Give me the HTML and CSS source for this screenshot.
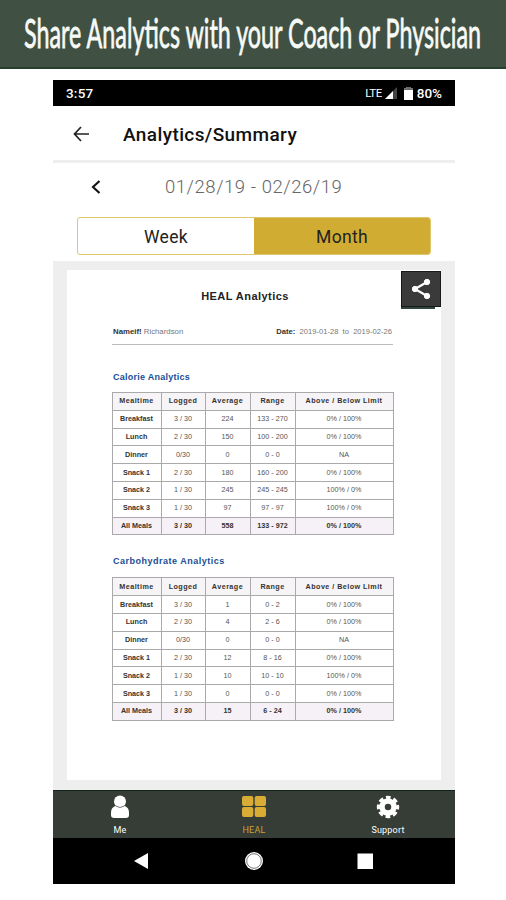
FILE: index.html
```html
<!DOCTYPE html>
<html lang="en">
<head>
<meta charset="utf-8">
<title>HEAL Analytics</title>
<link rel="stylesheet" href="styles.css">
</head>
<body>
<header class="banner">
  <svg width="506" height="69"><text x="24" y="47.5" textLength="457" lengthAdjust="spacingAndGlyphs">Share Analytics with your Coach or Physician</text></svg>
</header>
<main class="phone">
  <div class="status">
    <span class="time">3:57</span>
    <span class="lte">LTE</span>
    <svg class="signal" width="13" height="12"><path d="M0 12L12 0V12Z" fill="#444"/><path d="M0 12L8 4V12Z" fill="#fff"/></svg>
    <svg class="battery" width="9" height="13"><path d="M2.500 0h4v1.500H9V13H0V1.500h2.500z" fill="#fff"/><path d="M2.500 0h4v1.500H9V3H0V1.500h2.500z" fill="#666"/></svg>
    <span class="percent">80%</span>
  </div>
  <div class="appbar">
    <svg width="16" height="16" fill="none" stroke="#222" stroke-width="1.700"><path d="M8 1L1.500 8L8 15M1.500 8H16"/></svg>
    <h1>Analytics/Summary</h1>
  </div>
  <div class="dates">
    <svg width="10" height="14" fill="none" stroke="#111" stroke-width="2.100"><path d="M8.500 1L2 7L8.500 13"/></svg>
    <span>01/28/19 - 02/26/19</span>
  </div>
  <div class="segments"><span>Week</span><span class="active">Month</span></div>
  <section class="viewer">
    <article class="paper">
      <h2>HEAL Analytics</h2>
      <div class="meta"><span><b>Nameif!</b> Richardson</span><span class="range"><b>Date:</b>&nbsp; 2019-01-28 &nbsp;to&nbsp; 2019-02-26</span></div>
      <h3 class="calorie">Calorie Analytics</h3>
      <table>
        <colgroup><col class="c1"><col class="c2"><col class="c3"><col class="c4"><col class="c5"></colgroup>
        <tr><th>Mealtime</th><th>Logged</th><th>Average</th><th>Range</th><th>Above / Below Limit</th></tr>
        <tr><td>Breakfast</td><td>3 / 30</td><td>224</td><td>133 - 270</td><td>0% / 100%</td></tr>
        <tr><td>Lunch</td><td>2 / 30</td><td>150</td><td>100 - 200</td><td>0% / 100%</td></tr>
        <tr><td>Dinner</td><td>0/30</td><td>0</td><td>0 - 0</td><td>NA</td></tr>
        <tr><td>Snack 1</td><td>2 / 30</td><td>180</td><td>160 - 200</td><td>0% / 100%</td></tr>
        <tr><td>Snack 2</td><td>1 / 30</td><td>245</td><td>245 - 245</td><td>100% / 0%</td></tr>
        <tr><td>Snack 3</td><td>1 / 30</td><td>97</td><td>97 - 97</td><td>100% / 0%</td></tr>
        <tr class="total"><td>All Meals</td><td>3 / 30</td><td>558</td><td>133 - 972</td><td>0% / 100%</td></tr>
      </table>
      <h3 class="carb">Carbohydrate Analytics</h3>
      <table>
        <colgroup><col class="c1"><col class="c2"><col class="c3"><col class="c4"><col class="c5"></colgroup>
        <tr><th>Mealtime</th><th>Logged</th><th>Average</th><th>Range</th><th>Above / Below Limit</th></tr>
        <tr><td>Breakfast</td><td>3 / 30</td><td>1</td><td>0 - 2</td><td>0% / 100%</td></tr>
        <tr><td>Lunch</td><td>2 / 30</td><td>4</td><td>2 - 6</td><td>0% / 100%</td></tr>
        <tr><td>Dinner</td><td>0/30</td><td>0</td><td>0 - 0</td><td>NA</td></tr>
        <tr><td>Snack 1</td><td>2 / 30</td><td>12</td><td>8 - 16</td><td>0% / 100%</td></tr>
        <tr><td>Snack 2</td><td>1 / 30</td><td>10</td><td>10 - 10</td><td>100% / 0%</td></tr>
        <tr><td>Snack 3</td><td>1 / 30</td><td>0</td><td>0 - 0</td><td>0% / 100%</td></tr>
        <tr class="total"><td>All Meals</td><td>3 / 30</td><td>15</td><td>6 - 24</td><td>0% / 100%</td></tr>
      </table>
    </article>
    <div class="share">
      <svg width="20" height="22" fill="#fff" stroke="#fff"><path d="M16 4L4 11L16 18" fill="none" stroke-width="2.200"/><circle cx="16" cy="4" r="2.700"/><circle cx="4" cy="11" r="2.700"/><circle cx="16" cy="18" r="2.700"/></svg>
    </div>
  </section>
  <nav class="tabs">
    <div>
      <svg width="24" height="24"><path d="M3 18C3 13 6 11 8 11H16C18 11 21 13 21 18V20Q21 23 18 23H6Q3 23 3 20Z" fill="#fff"/><circle cx="12" cy="6.500" r="6" fill="#fff"/><path d="M7.500 11Q12 14 16.500 11" fill="none" stroke="#777"/></svg>
      <span>Me</span>
    </div>
    <div class="active">
      <svg width="24" height="24" fill="#d9ad35"><rect y="1" width="11.300" height="10" rx="2"/><rect x="12.700" y="1" width="11.300" height="10" rx="2"/><rect y="12" width="11.300" height="10" rx="2"/><rect x="12.700" y="12" width="11.300" height="10" rx="2"/></svg>
      <span>HEAL</span>
    </div>
    <div>
      <svg width="24" height="24"><g fill="none" stroke="#fff"><circle cx="12" cy="12" r="6" stroke-width="5.500"/><circle cx="12" cy="12" r="9.500" stroke-width="3.400" stroke-dasharray="4.600 2.861" stroke-dashoffset="2.300"/></g></svg>
      <span>Support</span>
    </div>
  </nav>
  <div class="system">
    <svg width="402" height="46" fill="#fff"><path d="M81 23L95 15V31Z"/><circle cx="201" cy="23" r="9"/><circle cx="201" cy="23" r="7.300" fill="none" stroke="#777"/><rect x="304.500" y="15.500" width="15.500" height="15.500"/></svg>
  </div>
</main>
</body>
</html>
```

FILE: styles.css
```css
* { box-sizing: border-box; }
body { margin: 0; background: #fff; font-family: Roboto, sans-serif; }
svg { display: block; flex: none; overflow: visible; }
.banner { height: 69px; background: #405144; border-bottom: 2px solid #25402f; }
.banner text { font: 41px Lato, sans-serif; fill: #f7faf5; stroke: #f7faf5; stroke-width: .8px; }
.phone { width: 402px; height: 805px; margin: 11px 0 0 53px; display: flex; flex-direction: column; }
.status { height: 26px; background: #000; color: #fff; display: flex; align-items: center; padding: 0 13px; font-size: 13.5px; font-weight: 500; }
.time { flex: 1; letter-spacing: .2px; }
.lte { font-size: 11.5px; font-weight: 400; letter-spacing: -.5px; }
.signal { margin-left: 3px; }
.battery { margin: 0 4px 0 6px; }
.appbar { height: 57px; border-bottom: 3px solid #eee; display: flex; align-items: center; padding: 2px 0 0 20px; }
.appbar h1 { margin: 0 0 0 34px; font-size: 19px; font-weight: 500; letter-spacing: .4px; color: #111; }
.dates { height: 54px; display: flex; align-items: center; padding: 0 0 7px 38px; color: #666; font-size: 18.500px; font-weight: 300; }
.dates span { margin-left: 64px; letter-spacing: .55px; white-space: nowrap; }
.segments { height: 38px; width: 354px; margin-left: 24px; display: grid; grid-template-columns: 1fr 1fr; border: 1px solid #ddc76f; border-radius: 3px; overflow: hidden; font-size: 17.500px; letter-spacing: .3px; color: #222; }
.segments span { display: flex; align-items: center; justify-content: center; padding-top: 2px; }
.segments .active { background: #d1ac33; }
.viewer { position: relative; height: 529px; margin-top: 6px; background: #eee; padding: 9px 14px; }
.paper { width: 374px; height: 510px; background: #fff; padding: 19px 48px 0 45px; font-family: "Liberation Sans", sans-serif; }
.paper h2 { margin: 0; text-align: center; font-size: 11px; line-height: 15px; letter-spacing: .45px; color: #222; padding-right: 15px; }
.meta { display: flex; justify-content: space-between; margin-top: 22px; height: 19px; border-bottom: 1px solid #bbb; padding: 0 1px; font-size: 7.800px; line-height: 12px; color: #777; white-space: nowrap; }
.meta b { color: #333; }
.meta .range { font-size: 7.600px; }
.paper h3 { margin: 0 0 0 1px; color: #174d96; font-size: 9px; line-height: 12px; letter-spacing: .25px; }
.paper .calorie { margin-top: 26px; margin-bottom: 9px; }
.paper .carb { margin-top: 20px; margin-bottom: 10px; letter-spacing: .5px; }
table { width: 281px; table-layout: fixed; border-collapse: collapse; font-size: 7.200px; color: #555; }
.c1 { width: 49px; } .c2 { width: 44px; } .c3 { width: 45px; } .c4 { width: 45px; } .c5 { width: 98px; }
th, td { height: 17.8px; padding: 0 1px 0 0; border: 1px solid #aaa; text-align: center; line-height: 10px; white-space: nowrap; }
th { color: #333; background: #f7f4f7; letter-spacing: .45px; }
td:first-child { font-weight: bold; color: #333; }
.total td { font-weight: bold; color: #333; background: #f5f1f6; }
.share { position: absolute; left: 348px; top: 10px; width: 40px; height: 36px; background: #3a3a3a; border: 1px solid #181818; display: flex; align-items: center; justify-content: center; box-shadow: -3px 5px 0 -3px #30463c; }
.tabs { height: 48px; background: #353d36; border-top: 1.500px solid #10251a; display: grid; grid-template-columns: repeat(3, 1fr); color: #fff; }
.tabs div { display: flex; flex-direction: column; align-items: center; padding-top: 4px; font-size: 9px; line-height: 10px; letter-spacing: .2px; }
.tabs span { margin-top: 6px; }
.tabs .active { color: #caa231; }
.system { height: 46px; background: #000; }
```
